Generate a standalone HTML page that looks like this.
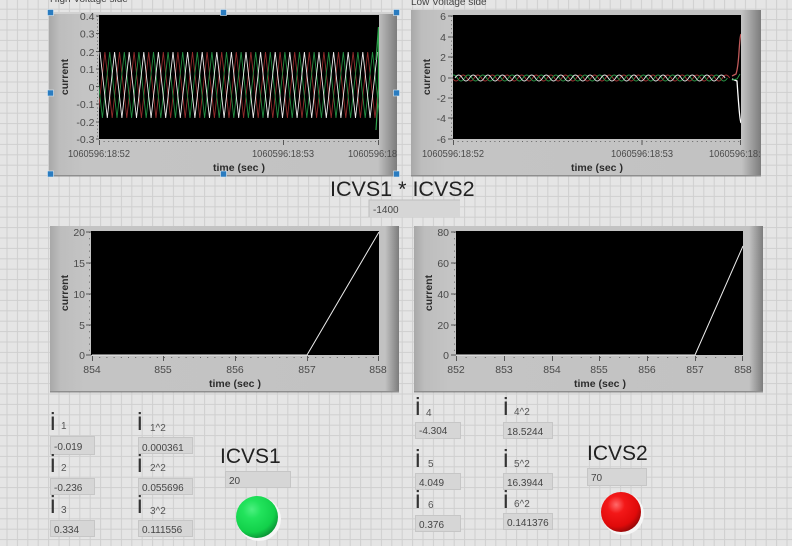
<!DOCTYPE html>
<html><head><meta charset="utf-8"><style>
html,body{margin:0;padding:0;width:792px;height:546px;overflow:hidden;background:#e4e4e4}
svg{display:block;font-family:"Liberation Sans",sans-serif;filter:blur(.35px)}
.t{font-size:10.5px;fill:#4a4a4a}
.y{font-size:10.5px;fill:#4a4a4a}
.a{font-size:10.5px;font-weight:bold;fill:#2c2c2c}
.b{font-size:10px;fill:#444}
.big{font-size:21px;fill:#222}
.i{font-size:25px;fill:#333}
.s{font-size:10px;fill:#555}
.box{fill:#d6d6d6}
</style></head><body>
<svg width="792" height="546" viewBox="0 0 792 546" xmlns="http://www.w3.org/2000/svg">
<defs>
<pattern id="g" width="10.4" height="10.4" patternUnits="userSpaceOnUse" x="6.500" y="8.700">
<rect width="10.4" height="10.4" fill="#e5e5e5"/>
<path d="M.5 0V10.4M0 .5H10.4" stroke="#cfcfcf" stroke-width="1" fill="none"/>
</pattern>
<linearGradient id="p" x1="0" x2="1" y1="0" y2="0">
<stop offset="0" stop-color="#a8a8a8"/><stop offset=".03" stop-color="#bdbdbd"/><stop offset=".1" stop-color="#c4c4c4"/><stop offset=".945" stop-color="#c2c2c2"/><stop offset="1" stop-color="#7c7c7c"/>
</linearGradient>
<linearGradient id="p2" x1="0" x2="1" y1="0" y2="0">
<stop offset="0" stop-color="#a8a8a8"/><stop offset=".03" stop-color="#bdbdbd"/><stop offset=".1" stop-color="#c4c4c4"/><stop offset=".96" stop-color="#c2c2c2"/><stop offset="1" stop-color="#7c7c7c"/>
</linearGradient>
<radialGradient id="gr" cx=".38" cy=".32" r=".72">
<stop offset="0" stop-color="#4cf080"/><stop offset=".3" stop-color="#22e35c"/><stop offset=".75" stop-color="#12d04a"/><stop offset="1" stop-color="#0a8f34"/>
</radialGradient>
<radialGradient id="rd" cx=".38" cy=".32" r=".72">
<stop offset="0" stop-color="#ff6a6a"/><stop offset=".3" stop-color="#f31818"/><stop offset=".75" stop-color="#e00a0a"/><stop offset="1" stop-color="#8f0808"/>
</radialGradient>
<clipPath id="c1"><rect x="99" y="15" width="280" height="124"/></clipPath>
<clipPath id="c2"><rect x="453" y="15" width="288" height="124"/></clipPath>
<clipPath id="c1b"><rect x="50" y="140" width="347" height="36"/></clipPath>
<clipPath id="c2b"><rect x="411" y="140" width="350" height="36"/></clipPath>
</defs>
<rect width="792" height="546" fill="url(#g)"/>

<text x="50" y="2" font-size="10" fill="#444">High Voltage side</text>
<text x="411" y="5" font-size="10" fill="#444">Low Voltage side</text>

<!-- Chart 1 -->
<rect x="49" y="12" width="348" height="164" fill="url(#p)"/>
<rect x="49" y="12" width="348" height="2" fill="#d2d2d2"/>
<rect x="49" y="175" width="348" height="1.500" fill="#8e8e8e"/>
<rect x="99" y="15" width="280" height="124" fill="#000"/>
<g clip-path="url(#c1)" fill="none" stroke-width=".9">
<path stroke="#932c2c" d="M90.300 52l7.300 66l7.300 -66l7.300 66l7.300 -66l7.300 66l7.300 -66l7.300 66l7.300 -66l7.300 66l7.300 -66l7.300 66l7.300 -66l7.300 66l7.300 -66l7.300 66l7.300 -66l7.300 66l7.300 -66l7.300 66l7.300 -66l7.300 66l7.300 -66l7.300 66l7.300 -66l7.300 66l7.300 -66l7.300 66l7.300 -66l7.300 66l7.300 -66l7.300 66l7.300 -66l7.300 66l7.300 -66l7.300 66l7.300 -66l7.300 66l7.300 -66l7.300 66l7.300 -66"/>
<path stroke="#238f42" d="M95.100 52l7.300 66l7.300 -66l7.300 66l7.300 -66l7.300 66l7.300 -66l7.300 66l7.300 -66l7.300 66l7.300 -66l7.300 66l7.300 -66l7.300 66l7.300 -66l7.300 66l7.300 -66l7.300 66l7.300 -66l7.300 66l7.300 -66l7.300 66l7.300 -66l7.300 66l7.300 -66l7.300 66l7.300 -66l7.300 66l7.300 -66l7.300 66l7.300 -66l7.300 66l7.300 -66l7.300 66l7.300 -66l7.300 66l7.300 -66l7.300 66l7.300 -66l7.300 66l7.300 -66"/>
<path stroke="#ececec" d="M100 52l7.300 66l7.300 -66l7.300 66l7.300 -66l7.300 66l7.300 -66l7.300 66l7.300 -66l7.300 66l7.300 -66l7.300 66l7.300 -66l7.300 66l7.300 -66l7.300 66l7.300 -66l7.300 66l7.300 -66l7.300 66l7.300 -66l7.300 66l7.300 -66l7.300 66l7.300 -66l7.300 66l7.300 -66l7.300 66l7.300 -66l7.300 66l7.300 -66l7.300 66l7.300 -66l7.300 66l7.300 -66l7.300 66l7.300 -66l7.300 66l7.300 -66"/>
<path stroke="#2fa24c" stroke-width="1.200" d="M376 60L378.500 27V90L376 130"/>
</g>
<g stroke="#555" fill="none">
<path d="M96 16H99M96 33.500H99M96 51.500H99M96 69H99M96 86.500H99M96 104H99M96 122H99M96 139H99"/>
<path stroke="#666" stroke-dasharray="1 2.520" d="M97.500 16V139"/>
<path stroke="#666" stroke-dasharray="1 3.600" d="M99 141.500H379"/>
<path d="M99.500 140V145M283.500 140V145M378.500 140V145"/>
</g>
<g class="y" text-anchor="end">
<text x="94.500" y="20">0.4</text><text x="94.500" y="37.500">0.3</text><text x="94.500" y="56">0.2</text><text x="94.500" y="73">0.1</text><text x="94.500" y="91">0</text><text x="94.500" y="108">-0.1</text><text x="94.500" y="126">-0.2</text><text x="94.500" y="143">-0.3</text>
</g>
<g class="t" clip-path="url(#c1b)">
<text x="68" y="157" textLength="62" lengthAdjust="spacingAndGlyphs">1060596:18:52</text>
<text x="252" y="157" textLength="62" lengthAdjust="spacingAndGlyphs">1060596:18:53</text>
<text x="348" y="157" textLength="62" lengthAdjust="spacingAndGlyphs">1060596:18:54</text>
</g>
<text class="a" x="213" y="171">time (sec )</text>
<text class="a" transform="translate(68,77) rotate(-90)" text-anchor="middle">current</text>
<g fill="#2a7cc0" stroke="#dbe8f2" stroke-width=".6">
<rect x="47.500" y="9.500" width="6" height="6"/><rect x="220.500" y="9.500" width="6" height="6"/><rect x="393.500" y="9.500" width="6" height="6"/>
<rect x="47.500" y="90" width="6" height="6"/><rect x="393.500" y="90" width="6" height="6"/>
<rect x="47.500" y="171" width="6" height="6"/><rect x="220.500" y="171" width="6" height="6"/><rect x="393.500" y="171" width="6" height="6"/>
</g>

<!-- Chart 2 -->
<rect x="411" y="10" width="350" height="166.500" fill="url(#p)"/>
<rect x="411" y="175" width="350" height="1.500" fill="#8e8e8e"/>
<rect x="453" y="15" width="288" height="124" fill="#000"/>
<g clip-path="url(#c2)" fill="none" stroke-width=".9">
<path stroke="#a83535" d="M445 78q3.650 -6 7.300 0t7.300 0t7.300 0t7.300 0t7.300 0t7.300 0t7.300 0t7.300 0t7.300 0t7.300 0t7.300 0t7.300 0t7.300 0t7.300 0t7.300 0t7.300 0t7.300 0t7.300 0t7.300 0t7.300 0t7.300 0t7.300 0t7.300 0t7.300 0t7.300 0t7.300 0t7.300 0t7.300 0t7.300 0t7.300 0t7.300 0t7.300 0t7.300 0t7.300 0t7.300 0t7.300 0t7.300 0t7.300 0t7.300 0"/>
<path stroke="#2a9a48" d="M450 78q3.650 -6 7.300 0t7.300 0t7.300 0t7.300 0t7.300 0t7.300 0t7.300 0t7.300 0t7.300 0t7.300 0t7.300 0t7.300 0t7.300 0t7.300 0t7.300 0t7.300 0t7.300 0t7.300 0t7.300 0t7.300 0t7.300 0t7.300 0t7.300 0t7.300 0t7.300 0t7.300 0t7.300 0t7.300 0t7.300 0t7.300 0t7.300 0t7.300 0t7.300 0t7.300 0t7.300 0t7.300 0t7.300 0t7.300 0"/>
<path stroke="#e4e4e4" d="M455 78q3.650 -6 7.300 0t7.300 0t7.300 0t7.300 0t7.300 0t7.300 0t7.300 0t7.300 0t7.300 0t7.300 0t7.300 0t7.300 0t7.300 0t7.300 0t7.300 0t7.300 0t7.300 0t7.300 0t7.300 0t7.300 0t7.300 0t7.300 0t7.300 0t7.300 0t7.300 0t7.300 0t7.300 0t7.300 0t7.300 0t7.300 0t7.300 0t7.300 0t7.300 0t7.300 0t7.300 0t7.300 0t7.300 0"/>
<rect x="733" y="70" width="8" height="14" fill="#000" stroke="none"/>
<path stroke="#c05a5a" stroke-width="1.300" d="M732 76L736 74Q738 68 739 52T741 34"/>
<path stroke="#fff" stroke-width="1.300" d="M732 79L737 81Q738 96 739 108T741 123"/>
<path stroke="#2fa24c" d="M732 80L737 79L740 74"/>
</g>
<g stroke="#555" fill="none">
<path d="M448 16H453M448 37H453M448 57H453M448 78H453M448 98H453M448 118H453M448 139H453"/>
<path stroke="#666" stroke-dasharray="1 3.100" d="M451.500 16V139"/>
<path stroke="#666" stroke-dasharray="1 3.600" d="M453 141.500H741"/>
<path d="M453.500 140V145M642 140V145M740.500 140V145"/>
</g>
<g class="y" text-anchor="end">
<text x="446" y="20">6</text><text x="446" y="41">4</text><text x="446" y="61">2</text><text x="446" y="82">0</text><text x="446" y="102">-2</text><text x="446" y="122">-4</text><text x="446" y="143">-6</text>
</g>
<g class="t" clip-path="url(#c2b)">
<text x="422" y="157" textLength="62" lengthAdjust="spacingAndGlyphs">1060596:18:52</text>
<text x="611" y="157" textLength="62" lengthAdjust="spacingAndGlyphs">1060596:18:53</text>
<text x="709" y="157" textLength="62" lengthAdjust="spacingAndGlyphs">1060596:18:54</text>
</g>
<text class="a" x="571" y="171">time (sec )</text>
<text class="a" transform="translate(430,77) rotate(-90)" text-anchor="middle">current</text>

<!-- middle -->
<text class="big" x="330" y="196" style="font-size:21.500px">ICVS1 * ICVS2</text>
<rect class="box" x="369" y="200" width="91" height="17"/>
<path d="M369 217V200H460" stroke="#bdbdbd" fill="none"/>
<text class="b" x="373" y="213">-1400</text>

<!-- Chart 3 -->
<rect x="50" y="226" width="349" height="166.500" fill="url(#p2)"/>
<rect x="50" y="391" width="349" height="1.500" fill="#8e8e8e"/>
<rect x="91" y="231" width="288" height="124" fill="#000"/>
<path d="M92 355H307L379 232" stroke="#eee" stroke-width="1" fill="none"/>
<g stroke="#555" fill="none">
<path d="M86 232H91M86 263H91M86 294H91M86 325H91M86 355H91"/>
<path stroke="#666" stroke-dasharray="1 5.200" d="M89.500 232V355"/>
<path stroke="#666" stroke-dasharray="1 6.200" d="M92 357.500H379"/>
<path d="M92.500 356V361M163.500 356V361M235.500 356V361M307.500 356V361M378.500 356V361"/>
</g>
<g class="y" text-anchor="end">
<text x="85" y="236">20</text><text x="85" y="267">15</text><text x="85" y="298">10</text><text x="85" y="329">5</text><text x="85" y="359">0</text>
</g>
<g class="t" text-anchor="middle">
<text x="92" y="373">854</text><text x="163" y="373">855</text><text x="235" y="373">856</text><text x="307" y="373">857</text><text x="378" y="373">858</text>
</g>
<text class="a" x="209" y="387">time (sec )</text>
<text class="a" transform="translate(68,293) rotate(-90)" text-anchor="middle">current</text>

<!-- Chart 4 -->
<rect x="414" y="226" width="349" height="166.500" fill="url(#p2)"/>
<rect x="414" y="391" width="349" height="1.500" fill="#8e8e8e"/>
<rect x="456" y="231" width="287" height="124" fill="#000"/>
<path d="M456 355H695L743 246" stroke="#eee" stroke-width="1" fill="none"/>
<g stroke="#555" fill="none">
<path d="M451 232H456M451 263H456M451 294H456M451 325H456M451 355H456"/>
<path stroke="#666" stroke-dasharray="1 5.200" d="M454.500 232V355"/>
<path stroke="#666" stroke-dasharray="1 8.600" d="M456 357.500H743"/>
<path d="M456.500 356V361M504.500 356V361M552.500 356V361M599.500 356V361M647.500 356V361M695.500 356V361M742.500 356V361"/>
</g>
<g class="y" text-anchor="end">
<text x="449" y="236">80</text><text x="449" y="267">60</text><text x="449" y="298">40</text><text x="449" y="329">20</text><text x="449" y="359">0</text>
</g>
<g class="t" text-anchor="middle">
<text x="456" y="373">852</text><text x="504" y="373">853</text><text x="552" y="373">854</text><text x="599" y="373">855</text><text x="647" y="373">856</text><text x="695" y="373">857</text><text x="743" y="373">858</text>
</g>
<text class="a" x="574" y="387">time (sec )</text>
<text class="a" transform="translate(432,293) rotate(-90)" text-anchor="middle">current</text>

<!-- indicators -->
<g class="box" stroke="#c6c6c6" stroke-width="1">
<rect x="50.500" y="436.500" width="44" height="18"/><rect x="50.500" y="478.500" width="44" height="16"/><rect x="50.500" y="520.500" width="44" height="16"/>
<rect x="138.500" y="437.500" width="54" height="16"/><rect x="138.500" y="478.500" width="54" height="16"/><rect x="138.500" y="520.500" width="54" height="16"/>
<rect x="225.500" y="471.500" width="65" height="16"/>
<rect x="415.500" y="422.500" width="45" height="16"/><rect x="415.500" y="473.500" width="45" height="16"/><rect x="415.500" y="515.500" width="45" height="16"/>
<rect x="503.500" y="422.500" width="49" height="16"/><rect x="503.500" y="473.500" width="49" height="16"/><rect x="503.500" y="513.500" width="49" height="16"/>
<rect x="587.500" y="468.500" width="59" height="17"/>
</g>
<g class="b">
<text x="54" y="450">-0.019</text><text x="54" y="491">-0.236</text><text x="54" y="533">0.334</text>
<text x="142" y="451">0.000361</text><text x="142" y="491">0.055696</text><text x="142" y="533">0.111556</text>
<text x="229" y="484">20</text>
<text x="419" y="434">-4.304</text><text x="419" y="486">4.049</text><text x="419" y="528">0.376</text>
<text x="507" y="435">18.5244</text><text x="507" y="486">16.3944</text><text x="507" y="526">0.141376</text>
<text x="591" y="481">70</text>
</g>
<g class="i">
<text x="50" y="430">i</text><text x="50" y="472">i</text><text x="50" y="513">i</text>
<text x="137" y="430">i</text><text x="137" y="472">i</text><text x="137" y="513">i</text>
<text x="415" y="415">i</text><text x="415" y="467">i</text><text x="415" y="508">i</text>
<text x="503" y="415">i</text><text x="503" y="467">i</text><text x="503" y="508">i</text>
</g>
<g class="s">
<text x="61" y="429">1</text><text x="61" y="471">2</text><text x="61" y="513">3</text>
<text x="150" y="431">1^2</text><text x="150" y="471">2^2</text><text x="150" y="514">3^2</text>
<text x="426" y="416">4</text><text x="428" y="467">5</text><text x="428" y="508">6</text>
<text x="514" y="415">4^2</text><text x="514" y="467">5^2</text><text x="514" y="507">6^2</text>
</g>
<text class="big" x="220" y="463">ICVS1</text>
<text class="big" x="587" y="460">ICVS2</text>

<circle cx="259" cy="519" r="22" fill="#f6f6f6"/>
<circle cx="257" cy="517" r="21" fill="url(#gr)"/>
<circle cx="623" cy="514" r="21" fill="#f6f6f6"/>
<circle cx="621" cy="512" r="20" fill="url(#rd)"/>
</svg>
</body></html>
